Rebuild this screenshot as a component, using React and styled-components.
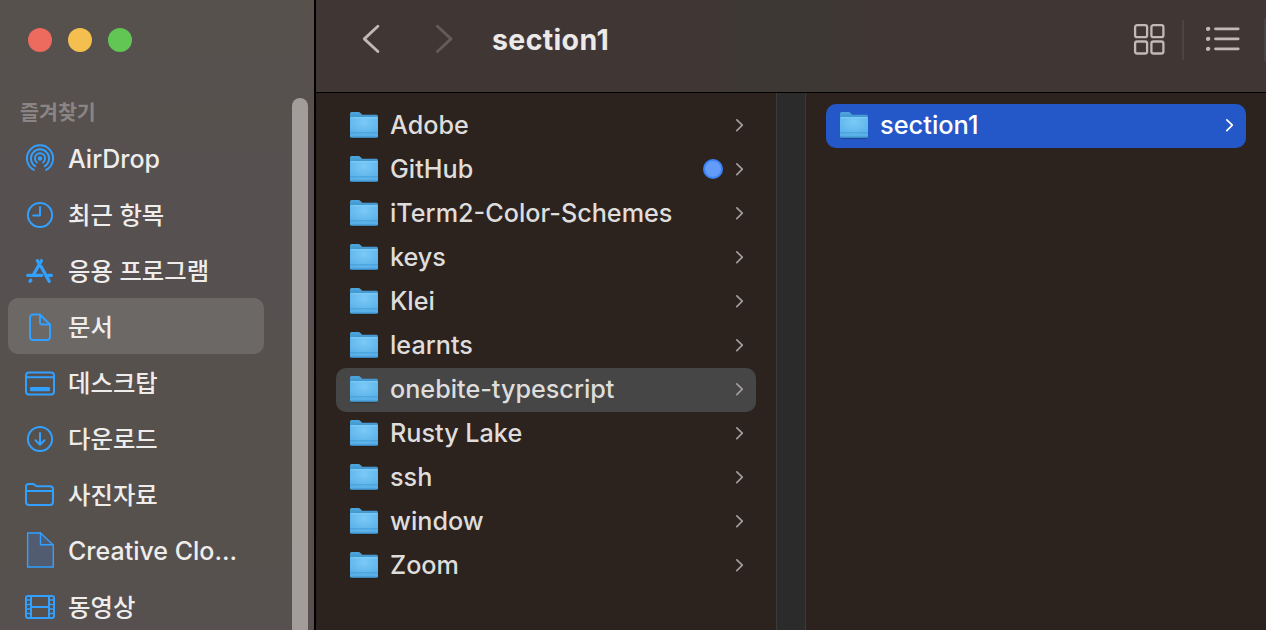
import React from 'react'
import styled, { createGlobalStyle } from 'styled-components'

const GlobalStyle = createGlobalStyle`
    * {
        box-sizing: border-box;
    }

    body {
        margin: 0;
        overflow: hidden;
        font-family: Inter, 'Noto Sans CJK KR', sans-serif;
    }

    svg {
        display: block;
        flex-shrink: 0;
    }
`

const Window = styled.div`
    display: flex;
    width: 1266px;
    height: 630px;
    overflow: hidden;
    background-color: #2c231f;
`

const Sidebar = styled.aside`
    display: flex;
    width: 316px;
    height: 100%;
    flex-shrink: 0;
    border-right: 2px solid #000;
    background-color: #56504e;
    background-image: linear-gradient(#56514b 0%, #565050 14%, #56514d 17%, #565050 24%, #565050 50%, #56514d 60%, #56514d 85%, #565050 100%);
`

const SidebarContent = styled.div`
    display: flex;
    flex-direction: column;
    width: 292px;
    padding-left: 8px;
`

const TrafficLights = styled.div`
    display: flex;
    gap: 16px;
    padding: 28px 20px 0;
`

const Light = styled.span`
    width: 24px;
    height: 24px;
    border-radius: 50%;
    background-color: ${({ color }) => color};
`

const SectionTitle = styled.h2`
    height: 34px;
    margin: 44px 0 0;
    padding-left: 12px;
    font-size: 20.6px;
    font-weight: 600;
    line-height: 34px;
    color: #8a8584;
`

const SidebarItem = styled.div`
    display: flex;
    align-items: center;
    gap: 12px;
    width: 256px;
    height: 56px;
    padding-left: 16px;
    flex-shrink: 0;
    border-radius: 10px;
    background-color: ${({ $active }) => ($active ? '#6c6866' : 'transparent')};
    color: #32a0ff;
`

const SidebarLabel = styled.span`
    padding-top: 2px;
    font-size: ${({ $latin }) => ($latin ? '25px' : '24.4px')};
    font-weight: 500;
    line-height: 54px;
    white-space: nowrap;
    color: #efedec;
`

const Scrollbar = styled.div`
    width: 16px;
    height: 540px;
    margin-top: 98px;
    border-radius: 8px;
    background-color: #a29c9b;
`

const Main = styled.main`
    display: flex;
    flex-direction: column;
    width: 950px;
`

const Toolbar = styled.header`
    display: flex;
    align-items: flex-start;
    height: 93px;
    flex-shrink: 0;
    border-bottom: 1px solid #000;
    background-image: linear-gradient(90deg, #403735 0%, #403735 42%, #3e3834 44%, #3e3834 55%, #403735 58%, #403735 100%);
    color: #c4b8b5;
`

const NavButtons = styled.div`
    display: flex;
    gap: 39px;
    padding: 20px 0 0 38px;
`

const Title = styled.h1`
    width: 180px;
    margin: 0 auto 0 31px;
    font-size: 28.5px;
    font-weight: 650;
    line-height: 80px;
    letter-spacing: 0.35px;
    color: #eceae9;
`

const ViewButtons = styled.div`
    display: flex;
    align-items: center;
    height: 40px;
    margin-top: 20px;
`

const Separator = styled.span`
    width: 2px;
    height: 40px;
    margin: 0 22px 0 17px;
    background-color: #4c4442;
`

const NextGroup = styled.span`
    width: 2px;
    height: 44px;
    margin-left: 23px;
    border-radius: 2px 0 0 2px;
    background-color: #4b4341;
`

const Columns = styled.div`
    display: flex;
    flex: 1;
`

const Column = styled.div`
    width: 460px;
    padding: 11px 20px 0;
`

const Gutter = styled.div`
    width: 30px;
    border: solid #3b3a39;
    border-width: 0 1px;
    background-color: #2b2b2b;
`

const rowColors = {
    none: 'transparent',
    path: '#464646',
    selected: '#2458c9',
}

const Row = styled.div`
    display: flex;
    align-items: center;
    height: 44px;
    padding: 0 11px 2px 12px;
    border-radius: 10px;
    background-color: ${({ $state }) => rowColors[$state]};
    color: ${({ $state }) => ($state === 'selected' ? '#fff' : '#a29d9b')};
`

const FileName = styled.span`
    margin: 0 auto 0 10px;
    font-size: ${({ $state }) => ($state === 'selected' ? '25.4px' : '25.2px')};
    font-weight: ${({ $state }) => ($state === 'selected' ? 500 : 450)};
    line-height: 42px;
    white-space: nowrap;
    color: ${({ $state }) => ($state === 'selected' ? '#fff' : '#dfdddc')};
`

const Tag = styled.span`
    width: 20px;
    height: 20px;
    margin-right: 12px;
    border: 2px solid #3b82f7;
    border-radius: 50%;
    background-color: #629bf8;
`

function Icon({ children, width = 2 }) {
    return (
        <svg width="32" height="40" viewBox="0 0 32 40" fill="none" stroke="currentColor" strokeWidth={width} strokeLinecap="round" strokeLinejoin="round">
            {children}
        </svg>
    )
}

const AirDropIcon = () => (
    <Icon width={1.9}>
        <circle cx="16" cy="20.5" r="2.2" fill="currentColor" stroke="none" />
        <path d="M12.9 24.4A5.1 5.1 0 1 1 19.1 24.4" />
        <path d="M11.3 28.2A9.1 9.1 0 1 1 20.7 28.2" />
        <path d="M9.8 31.9A13.1 13.1 0 1 1 22.2 31.9" />
    </Icon>
)

const ClockIcon = () => (
    <Icon width={2}>
        <circle cx="16" cy="21" r="12.1" />
        <path d="M16 13V21.5H9.2" />
    </Icon>
)

const AppsIcon = () => (
    <Icon width={3.3}>
        <path d="M3.7 25.3H17.7M24 25.3H27.4M17.4 10.7L9.6 24.5M13.4 10.7L14.6 12.8M17.2 16.8L25.2 31.2M6.8 30.2L6 31.2" />
    </Icon>
)

const DocumentIcon = () => (
    <Icon width={2}>
        <path d="M9 8.5H15.8L26 18.5V31A3 3 0 0 1 23 34H9A3 3 0 0 1 6 31V11.5A3 3 0 0 1 9 8.5Z" />
        <path d="M16 9V16.5A2 2 0 0 0 18 18.5H25.5" />
    </Icon>
)

const DesktopIcon = () => (
    <Icon>
        <rect x="2" y="10.5" width="28" height="22" rx="3" />
        <path d="M2 15.2H30" />
        <rect x="6" y="25" width="20" height="4.2" rx="1.2" fill="currentColor" stroke="none" />
    </Icon>
)

const DownloadIcon = () => (
    <Icon width={2}>
        <circle cx="16" cy="21" r="12.1" />
        <path d="M16 15V26.5M11.5 22.3L16 26.8L20.5 22.3" />
    </Icon>
)

const PicturesIcon = () => (
    <Icon>
        <path d="M2 28V12.8A2.8 2.8 0 0 1 4.8 10H8.8C10.7 10 11 12.2 13 12.2H26A3 3 0 0 1 29 15.2V28A3 3 0 0 1 26 31H5A3 3 0 0 1 2 28Z" />
        <path d="M2 17H29" />
    </Icon>
)

const CreativeIcon = () => (
    <Icon width={1.4}>
        <path d="M3.6 3H16.5L29.3 15V37H3.6Z" fill="#515c70" strokeLinejoin="miter" />
        <path d="M16.5 3V14.7H29" strokeLinejoin="miter" />
    </Icon>
)

const MoviesIcon = () => (
    <Icon width={2}>
        <rect x="2" y="10" width="28" height="22" rx="2" />
        <path d="M7 10V32M25 10V32M7 21H25" />
        <path d="M2 14H7M2 18.5H7M2 23H7M2 27.5H7M25 14H30M25 18.5H30M25 23H30M25 27.5H30" strokeWidth="1.6" />
    </Icon>
)

function FolderIcon() {
    return (
        <svg width="32" height="40" viewBox="0 0 32 40">
            <defs>
                <linearGradient id="folderBack" x1="0" y1="0" x2="0" y2="1">
                    <stop offset="0" stopColor="#4fa6db" />
                    <stop offset="0.3" stopColor="#3c8fcb" />
                </linearGradient>
                <radialGradient id="folderFront" cx="0.5" cy="0.25" r="0.7">
                    <stop offset="0" stopColor="#7bcaf7" />
                    <stop offset="1" stopColor="#59b0e8" />
                </radialGradient>
            </defs>
            <path d="M3 32.2H29V33.8H3Z" fill="#191b1c" opacity="0.4" />
            <path d="M2 8.5Q2 7 3.5 7H10.3Q11.6 7 12.5 8L13.6 9.2Q14.2 9.8 15.5 9.8H28.5Q30 9.8 30 11.3V31Q30 32.8 28.2 32.8H3.8Q2 32.8 2 31Z" fill="url(#folderBack)" />
            <path d="M2 13.7Q2 12.3 3.4 12.3H28.6Q30 12.3 30 13.7V31Q30 32.3 28.7 32.3H3.3Q2 32.3 2 31Z" fill="url(#folderFront)" />
            <path d="M2.6 12.8H29.4" stroke="#86d3fa" strokeWidth="1" />
            <path d="M2 27.8H30M2 31.7H30" stroke="#479ed7" strokeWidth="1" />
        </svg>
    )
}

const ChevronIcon = () => (
    <svg width="10" height="16" viewBox="0 0 10 16" fill="none" stroke="currentColor" strokeWidth="1.7" strokeLinecap="round" strokeLinejoin="round">
        <path d="M1.8 2.8L7.3 8.2L1.8 13.6" />
    </svg>
)

const NavIcon = ({ d, opacity = 1 }) => (
    <svg width="34" height="38" viewBox="0 0 34 38" fill="none" stroke="currentColor" strokeWidth="2.8" strokeLinecap="round" strokeLinejoin="round" opacity={opacity}>
        <path d={d} />
    </svg>
)

const GridIcon = () => (
    <svg width="32" height="32" viewBox="0 0 32 32" fill="none" stroke="currentColor" strokeWidth="2.3">
        <rect x="2.1" y="0.9" width="12" height="12" rx="2" transform="translate(0 0.3)" />
        <rect x="18.4" y="1.2" width="12" height="12" rx="2" />
        <rect x="2.1" y="17.5" width="12" height="12" rx="2" />
        <rect x="18.4" y="17.5" width="12" height="12" rx="2" />
    </svg>
)

const ListIcon = () => (
    <svg width="35" height="32" viewBox="0 0 35 32" fill="none" stroke="currentColor" strokeWidth="2.8" strokeLinecap="round">
        <path d="M9.5 4.8H32.2M9.5 14.8H32.2M9.5 24.8H32.2" />
        <path d="M2.1 4.8H2.2M2.1 14.8H2.2M2.1 24.8H2.2" strokeWidth="4.3" />
    </svg>
)

const favorites = [
    { name: 'AirDrop', icon: AirDropIcon, latin: true },
    { name: '최근 항목', icon: ClockIcon },
    { name: '응용 프로그램', icon: AppsIcon },
    { name: '문서', icon: DocumentIcon, active: true },
    { name: '데스크탑', icon: DesktopIcon },
    { name: '다운로드', icon: DownloadIcon },
    { name: '사진자료', icon: PicturesIcon },
    { name: 'Creative Clo...', icon: CreativeIcon, latin: true },
    { name: '동영상', icon: MoviesIcon },
]

const folders = [
    { name: 'Adobe' },
    { name: 'GitHub', tagged: true },
    { name: 'iTerm2-Color-Schemes' },
    { name: 'keys' },
    { name: 'Klei' },
    { name: 'learnts' },
    { name: 'onebite-typescript', state: 'path' },
    { name: 'Rusty Lake' },
    { name: 'ssh' },
    { name: 'window' },
    { name: 'Zoom' },
]

function Folder({ name, state = 'none', tagged }) {
    return (
        <Row $state={state}>
            <FolderIcon />
            <FileName $state={state}>{name}</FileName>
            {tagged && <Tag />}
            <ChevronIcon />
        </Row>
    )
}

function App() {
    return (
        <>
            <GlobalStyle />
            <Window>
                <Sidebar>
                    <SidebarContent>
                        <TrafficLights>
                            <Light color="#ed6a5e" />
                            <Light color="#f5bf4f" />
                            <Light color="#62c655" />
                        </TrafficLights>
                        <SectionTitle>즐겨찾기</SectionTitle>
                        {favorites.map(({ name, icon: ItemIcon, latin, active }) => (
                            <SidebarItem key={name} $active={active}>
                                <ItemIcon />
                                <SidebarLabel $latin={latin}>{name}</SidebarLabel>
                            </SidebarItem>
                        ))}
                    </SidebarContent>
                    <Scrollbar />
                </Sidebar>
                <Main>
                    <Toolbar>
                        <NavButtons>
                            <NavIcon d="M23.9 6.3L10.3 18.9L23.9 31.5" />
                            <NavIcon d="M10.4 6.3L24 18.9L10.4 31.5" opacity={0.28} />
                        </NavButtons>
                        <Title>section1</Title>
                        <ViewButtons>
                            <GridIcon />
                            <Separator />
                            <ListIcon />
                            <NextGroup />
                        </ViewButtons>
                    </Toolbar>
                    <Columns>
                        <Column>
                            {folders.map((folder) => (
                                <Folder key={folder.name} {...folder} />
                            ))}
                        </Column>
                        <Gutter />
                        <Column>
                            <Folder name="section1" state="selected" />
                        </Column>
                    </Columns>
                </Main>
            </Window>
        </>
    )
}

export default App
